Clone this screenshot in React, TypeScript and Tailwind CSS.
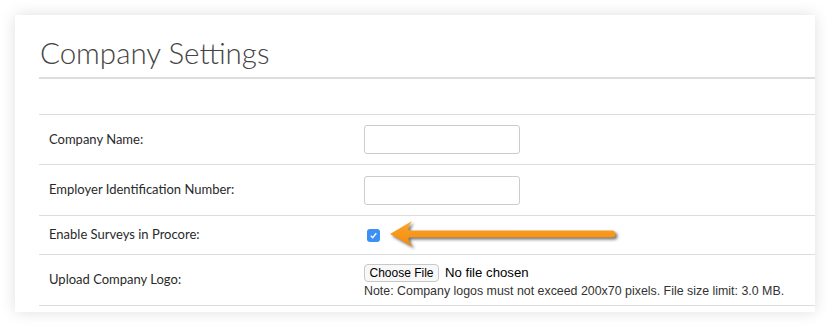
import React from "react";

const Row = ({
  label,
  className,
  children,
}: {
  label: string;
  className: string;
  children: React.ReactNode;
}) => (
  <div className={`grid grid-cols-[325px_1fr] items-center border-t border-[#dddddd] ${className}`}>
    <div className="pl-[10px] text-[13px] text-[#2a2a2a]">{label}</div>
    <div className="flex items-center">{children}</div>
  </div>
);

const TextBox = () => (
  <input
    type="text"
    className="h-[29px] w-[156px] rounded-[3px] border border-[#cccccc] bg-white outline-none"
  />
);

const Arrow = () => (
  <svg
    width="232"
    height="32"
    viewBox="0 0 232 32"
    className="ml-[8px] drop-shadow-[2px_2px_1.5px_rgba(0,0,0,0.55)]"
  >
    <defs>
      <linearGradient id="org" x1="0" y1="0" x2="0" y2="1">
        <stop offset="0" stopColor="#fba52c" />
        <stop offset="1" stopColor="#f28a0c" />
      </linearGradient>
    </defs>
    <path
      d="M2 15 L24 2 Q19 9 21 11.5 L224 11.5 A3.5 3.5 0 0 1 224 18.5 L21 18.5 Q19 21 25 28 Z"
      fill="url(#org)"
    />
  </svg>
);

export default function App() {
  return (
    <div className="h-[327px] w-[830px] bg-white pl-[15px] pt-[15px] font-['Lato',sans-serif]">
      <div className="h-[297px] w-[800px] bg-white pl-[24px] pt-[20px] shadow-[0_0_14px_rgba(0,0,0,0.13)]">
        <div className="border-b-2 border-[#dddddd] pb-[6px]">
          <h1 className="pl-[1px] text-[29.5px] leading-[36px] font-light text-[#444444]">
            Company Settings
          </h1>
        </div>
        <div className="mt-[35px] border-b border-[#dddddd]">
          <Row label="Company Name:" className="h-[50px]">
            <TextBox />
          </Row>
          <Row label="Employer Identification Number:" className="h-[51px]">
            <TextBox />
          </Row>
          <Row label="Enable Surveys in Procore:" className="h-[39px]">
            <span className="ml-[3px] flex h-[13px] w-[13px] items-center justify-center rounded-[3px] bg-[#3b8ff6]">
              <svg width="9" height="9" viewBox="0 0 9 9">
                <path d="M1.8 4.8 L3.7 6.7 L7.3 2.3" fill="none" stroke="white" strokeWidth="1.4" />
              </svg>
            </span>
            <Arrow />
          </Row>
          <Row label="Upload Company Logo:" className="h-[51px]">
            <div className="flex flex-col pt-[2px] font-['Liberation_Sans',Arial,sans-serif] text-[12.4px] text-[#222222]">
              <div className="flex items-center">
                <span className="flex h-[18px] w-[75px] items-center justify-center rounded-[4px] border border-[#c8c8c8] bg-[#f8f8f8] text-[12px] text-black">
                  Choose File
                </span>
                <span className="ml-[6px] text-[13.2px] text-black">No file chosen</span>
              </div>
              <div className="mt-[1px] leading-[15px] text-[#333333]">
                Note: Company logos must not exceed 200x70 pixels. File size limit: 3.0 MB.
              </div>
            </div>
          </Row>
        </div>
      </div>
    </div>
  );
}
